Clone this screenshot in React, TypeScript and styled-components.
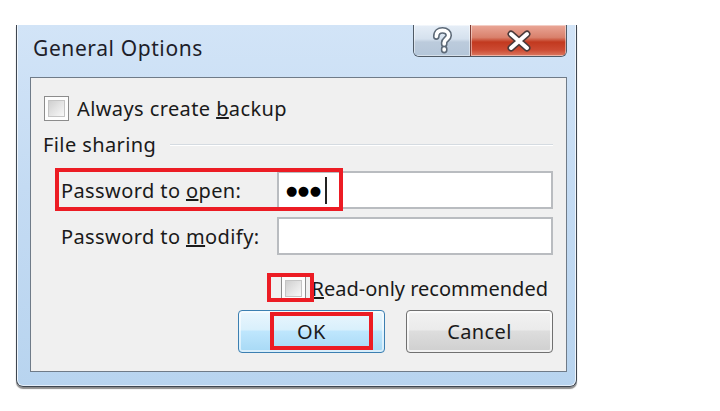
import React, { FunctionComponent, ReactNode } from 'react'
import styled, { createGlobalStyle } from 'styled-components'

const GlobalStyle = createGlobalStyle`
  html, body {
    margin: 0;
    padding: 0;
    background: #fff;
  }
  body {
    font-family: 'Noto Sans', 'Open Sans', sans-serif;
    color: #1a1a1a;
  }
`

const Page = styled.div`
  width: 720px;
  height: 411px;
  padding: 25px 0 0 16px;
  box-sizing: border-box;
`

const Window = styled.div`
  width: 561px;
  height: 362px;
  box-sizing: border-box;
  display: flex;
  flex-direction: column;
  padding: 0 9px 14px 13px;
  background: linear-gradient(180deg, #d2e4f7 0%, #c4dbf3 45%, #b8d4ef 100%);
  border: 1px solid #3e4650;
  border-top: none;
  border-radius: 0 0 7px 7px;
  box-shadow:
    inset 1px 0 0 #eef5fc,
    inset -1px 0 0 #eef5fc,
    inset 0 -1px 0 #e4eef9,
    0 2px 1px rgba(0, 0, 0, 0.45);
`

const TitleBar = styled.div`
  height: 52px;
  display: flex;
  justify-content: space-between;
  align-items: flex-start;
`

const Title = styled.div`
  font-size: 21px;
  letter-spacing: 0.6px;
  padding: 9px 0 0 3px;
  color: #1e1e2a;
`

const CaptionButtons = styled.div`
  display: flex;
  height: 32px;
  border: 1px solid #4f5a66;
  border-top: none;
  border-radius: 0 0 6px 6px;
  overflow: hidden;
  box-sizing: border-box;
`

const CaptionButton = styled.div<{ $close?: boolean }>`
  width: ${p => (p.$close ? '95px' : '56px')};
  display: flex;
  align-items: center;
  justify-content: center;
  background: ${p =>
    p.$close
      ? 'linear-gradient(180deg, #eaa798 0%, #d9816c 40%, #c2391f 55%, #cc4a32 80%, #dc7a62 100%)'
      : 'linear-gradient(180deg, #e6eef7 0%, #d5e1ee 45%, #bccbdc 55%, #b4c6d9 100%)'};
  border-left: ${p => (p.$close ? '1px solid #7d3b33' : 'none')};
  box-shadow: inset 0 0 0 1px rgba(255, 255, 255, 0.45);
`

const Panel = styled.div`
  flex: 1;
  display: flex;
  flex-direction: column;
  background: #f0f0f0;
  border: 1px solid #6f7b88;
  padding: 0 13px;
  font-size: 20px;
  letter-spacing: 0.4px;
`

const CheckRow = styled.label`
  display: flex;
  align-items: center;
  gap: 8px;
  margin-top: 18px;
  height: 25px;
`

const Box = styled.span`
  position: relative;
  flex: none;
  width: 25px;
  height: 25px;
  box-sizing: border-box;
  border: 1px solid #8c8c8c;
  background: #fdfdfd;

  &::after {
    content: '';
    position: absolute;
    inset: 3px;
    border: 1px solid #c4c4c4;
    background: linear-gradient(135deg, #cfcfcf 0%, #e6e6e6 55%, #f8f8f8 100%);
  }
`

const GroupHeader = styled.div`
  display: flex;
  align-items: center;
  gap: 14px;
  margin: 9px 0 0 -1px;
  height: 28px;

  &::after {
    content: '';
    flex: 1;
    height: 1px;
    background: #d5dbe1;
    box-shadow: 0 1px 0 #fff;
  }
`

const FieldRows = styled.div`
  display: flex;
  flex-direction: column;
  gap: 8px;
  margin-top: 13px;
`

const FieldRow = styled.div`
  position: relative;
  display: grid;
  grid-template-columns: 1fr 276px;
  align-items: center;
`

const FieldLabel = styled.span`
  padding-left: 17px;
`

const Field = styled.div`
  height: 38px;
  box-sizing: border-box;
  border: 2px solid #b9bcc0;
  background: #fff;
  display: flex;
  align-items: center;
  padding-left: 7px;
`

const Dots = styled.span`
  font-size: 13px;
  letter-spacing: 0.5px;
  color: #000;
  font-family: 'DejaVu Sans', sans-serif;
`

const Caret = styled.span`
  width: 2px;
  height: 27px;
  margin-left: 3px;
  background: #222;
`

const Mark = styled.span<{ $left: number; $top: number; $w: number; $h: number }>`
  position: absolute;
  left: ${p => p.$left}px;
  top: ${p => p.$top}px;
  width: ${p => p.$w}px;
  height: ${p => p.$h}px;
  box-sizing: border-box;
  border: 4px solid #ec1c24;
  pointer-events: none;
`

const ReadOnlyRow = styled.div`
  display: flex;
  justify-content: flex-end;
  align-items: center;
  gap: 6px;
  margin-top: 21px;
  padding-right: 5px;
  height: 25px;
  letter-spacing: 0;
`

const Anchor = styled.span`
  position: relative;
  display: flex;
`

const Buttons = styled.div`
  display: flex;
  justify-content: flex-end;
  gap: 21px;
  margin-top: 9px;
`

const Button = styled.div<{ $primary?: boolean }>`
  position: relative;
  width: 147px;
  height: 43px;
  box-sizing: border-box;
  display: flex;
  align-items: center;
  justify-content: center;
  border-radius: 4px;
  border: 1px solid ${p => (p.$primary ? '#3c7fb1' : '#707070')};
  background: ${p =>
    p.$primary
      ? 'linear-gradient(180deg, #eaf6fd 0%, #d9f0fc 45%, #bee6fd 50%, #a7d9f5 100%)'
      : 'linear-gradient(180deg, #f2f2f2 0%, #ebebeb 45%, #dddddd 50%, #cfcfcf 100%)'};
  box-shadow: inset 0 0 0 2px ${p => (p.$primary ? 'rgba(255,255,255,0.55)' : 'rgba(255,255,255,0.7)')};
`

const questionPath =
  'M5.5 8.5 C5.5 4.5 8 3 11 3 C14.5 3 16.5 5 16.5 7.5 C16.5 10.5 12.5 11 12.5 14 L12.5 15 M12.5 19.5 L12.5 20.5'

const HelpIcon = () => (
  <svg width="25" height="27" viewBox="0 0 22 24">
    <path d={questionPath} fill="none" stroke="#5d6a78" strokeWidth="6" strokeLinecap="round" strokeLinejoin="round" />
    <path d={questionPath} fill="none" stroke="#fff" strokeWidth="3.2" strokeLinecap="round" strokeLinejoin="round" />
  </svg>
)

const CloseIcon = () => (
  <svg width="26" height="22" viewBox="0 0 26 22">
    <path d="M5 4 L21 18 M21 4 L5 18" stroke="#4a3a3a" strokeWidth="7" strokeLinecap="round" />
    <path d="M5 4 L21 18 M21 4 L5 18" stroke="#fff" strokeWidth="4" strokeLinecap="round" />
  </svg>
)

const Check: FunctionComponent<{ children: ReactNode }> = ({ children }) => (
  <CheckRow>
    <Box />
    <span>{children}</span>
  </CheckRow>
)

const App: FunctionComponent = () => (
  <Page>
    <GlobalStyle />
    <Window>
      <TitleBar>
        <Title>General Options</Title>
        <CaptionButtons>
          <CaptionButton>
            <HelpIcon />
          </CaptionButton>
          <CaptionButton $close>
            <CloseIcon />
          </CaptionButton>
        </CaptionButtons>
      </TitleBar>
      <Panel>
        <Check>
          Always create <u>b</u>ackup
        </Check>
        <GroupHeader>File sharing</GroupHeader>
        <FieldRows>
          <FieldRow>
            <FieldLabel>
              Password to <u>o</u>pen:
            </FieldLabel>
            <Field>
              <Dots>●●●</Dots>
              <Caret />
            </Field>
            <Mark $left={11} $top={-3} $w={288} $h={43} />
          </FieldRow>
          <FieldRow>
            <FieldLabel>
              Password to <u>m</u>odify:
            </FieldLabel>
            <Field />
          </FieldRow>
        </FieldRows>
        <ReadOnlyRow>
          <Anchor>
            <Box />
            <Mark $left={-14} $top={-3} $w={47} $h={29} />
          </Anchor>
          <span>
            <u>R</u>ead-only recommended
          </span>
        </ReadOnlyRow>
        <Buttons>
          <Button $primary>
            OK
            <Mark $left={31} $top={1} $w={103} $h={38} />
          </Button>
          <Button>Cancel</Button>
        </Buttons>
      </Panel>
    </Window>
  </Page>
)

export default App
